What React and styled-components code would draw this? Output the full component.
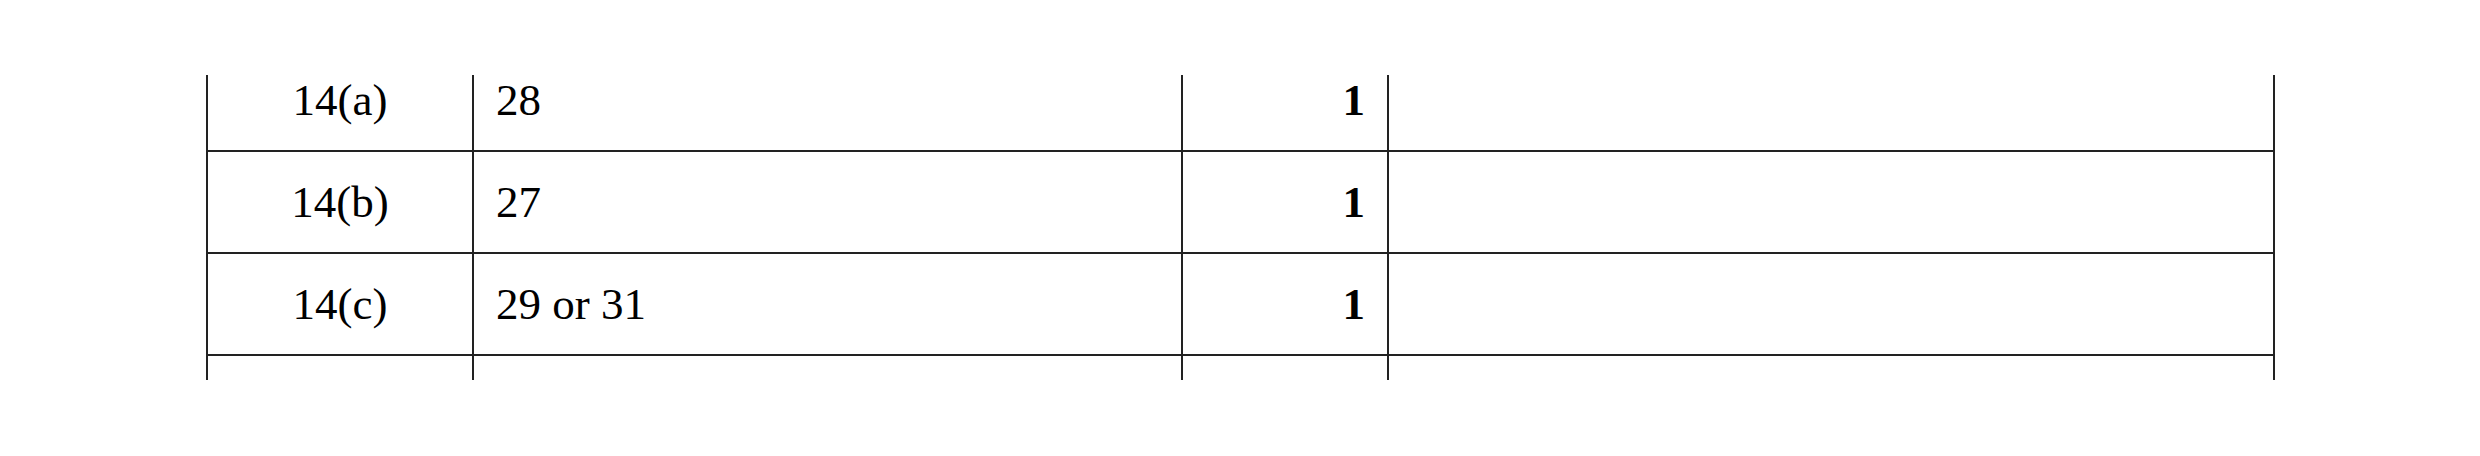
import React from 'react'
import styled, { createGlobalStyle } from 'styled-components'

const rows = [
  { q: '14(a)', answer: '28', marks: '1' },
  { q: '14(b)', answer: '27', marks: '1' },
  { q: '14(c)', answer: '29 or 31', marks: '1' },
  { q: '', answer: '', marks: '' },
]

export default function App() {
  return (
    <>
      <GlobalStyle />
      <Page>
        <Viewport>
          <MarkTable>
            <colgroup>
              <col style={{ width: 266 }} />
              <col style={{ width: 709 }} />
              <col style={{ width: 206 }} />
              <col style={{ width: 886 }} />
            </colgroup>
            <tbody>
              {rows.map((r, i) => (
                <Row key={i}>
                  <QuestionCell>{r.q}</QuestionCell>
                  <AnswerCell>{r.answer}</AnswerCell>
                  <MarkCell>{r.marks}</MarkCell>
                  <Cell />
                </Row>
              ))}
            </tbody>
          </MarkTable>
        </Viewport>
      </Page>
    </>
  )
}

const GlobalStyle = createGlobalStyle`
  html, body {
    margin: 0;
    padding: 0;
    background: #fff;
  }
  body {
    font-family: "Liberation Serif", "Times New Roman", serif;
    color: #000;
  }
`

const Page = styled.div`
  width: 2480px;
  height: 456px;
  padding: 75px 0 0 206px;
  box-sizing: border-box;
`

// the sheet is cut off above and below, so the table is clipped
const Viewport = styled.div`
  width: 2070px;
  height: 305px;
  overflow: hidden;
`

const MarkTable = styled.table`
  border-collapse: collapse;
  table-layout: fixed;
  margin-top: -27px;
`

const Row = styled.tr`
  height: 102px;
`

const Cell = styled.td`
  border: 2px solid #222;
  padding: 1px 22px 0;
  font-size: 45px;
  line-height: 1;
  vertical-align: middle;
`

const QuestionCell = styled(Cell)`
  text-align: center;
`

const AnswerCell = styled(Cell)`
  text-align: left;
`

const MarkCell = styled(Cell)`
  text-align: right;
  font-weight: bold;
`
